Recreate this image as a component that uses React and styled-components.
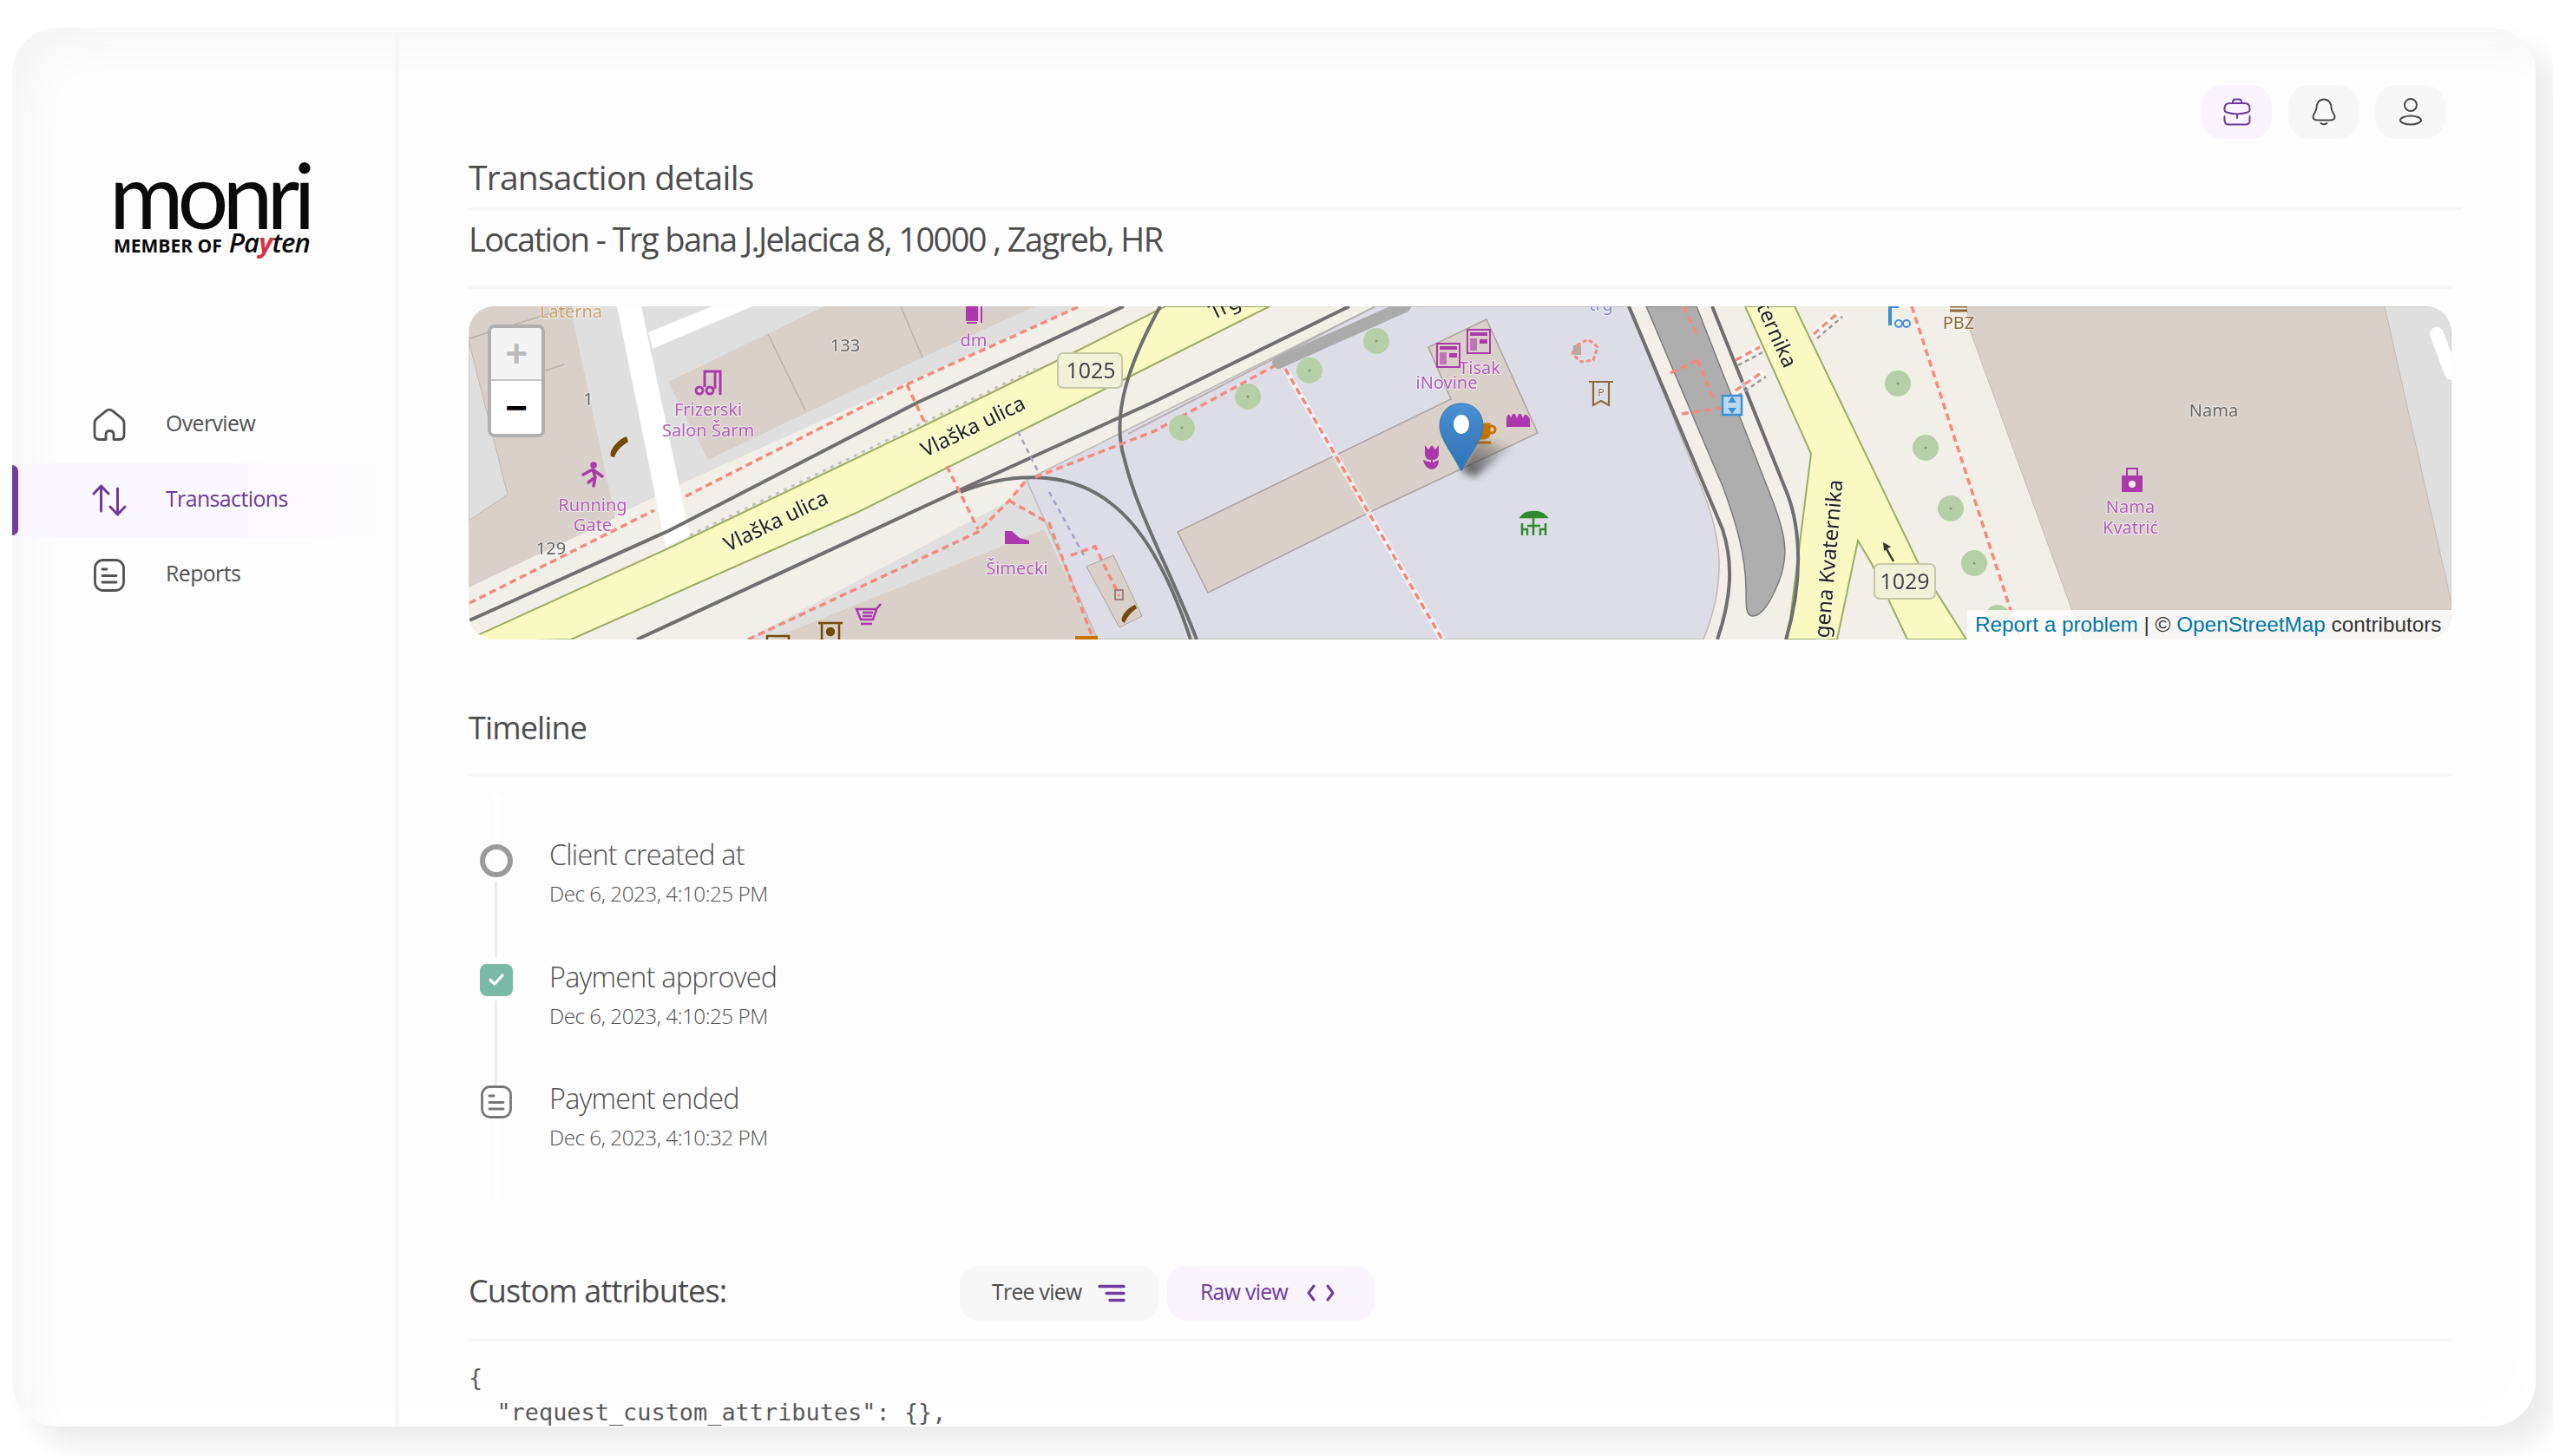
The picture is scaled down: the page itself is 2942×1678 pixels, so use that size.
import styled, { createGlobalStyle } from 'styled-components'

const GlobalStyle = createGlobalStyle`
  html, body { margin: 0; padding: 0; background: #fff; }
  body { font-family: "Open Sans", "Noto Sans", sans-serif; }
  * { box-sizing: border-box; }
`

const Page = styled.div`
  width: 2942px;
  height: 1678px;
  overflow: hidden;
  padding: 32px 20px 34px 14px;
  background: #fff;
`

const Card = styled.div`
  display: flex;
  width: 2908px;
  height: 1612px;
  border-radius: 52px;
  overflow: hidden;
  background: #fdfdfd;
  box-shadow: inset 30px 30px 60px -24px #f3f3f3, inset -24px -24px 40px -14px #ffffff, 22px 22px 30px #ececec;
`

const Sidebar = styled.aside`
  flex: 0 0 446px;
  border-right: 5px solid #f7f7f7;
  padding-top: 144px;
`

const Logo = styled.div`
  display: flex;
  flex-direction: column;
  padding-left: 117px;
  height: 271px;
  color: #0a0a0a;
`

const LogoMark = styled.div`
  font-family: Lato, sans-serif;
  font-size: 104px;
  line-height: 96px;
  letter-spacing: -7px;
  height: 86px;
  margin-left: -5px;
`

const LogoMember = styled.div`
  display: flex;
  align-items: baseline;
  gap: 8px;
  font-size: 21px;
  font-weight: 700;
  line-height: 34px;
  white-space: nowrap;
`

const Payten = styled.span`
  font-size: 31px;
  font-weight: 600;
  font-style: italic;
  letter-spacing: -0.9px;
  b { color: #d8323f; font-weight: 700; }
`

const NavRow = styled.div`
  display: flex;
  align-items: center;
  width: 431px;
  height: 86.5px;
  border-radius: 0 24px 24px 0;
  color: ${props => (props.$active ? '#6f3a9c' : '#515151')};
  background: ${props => (props.$active ? 'linear-gradient(90deg, #fbf7fe 0%, #fbf7fe 60%, rgba(251,247,254,0) 100%)' : 'transparent')};
  &::before {
    content: '';
    flex: 0 0 7px;
    height: 81px;
    border-radius: 0 8px 8px 0;
    background: ${props => (props.$active ? '#733c9f' : 'transparent')};
  }
`

const NavIcon = styled.span`
  display: flex;
  justify-content: center;
  flex: 0 0 40px;
  margin-left: 85px;
  margin-right: 45px;
`

const NavLabel = styled.span`
  font-size: 24.8px;
  letter-spacing: -0.55px;
  padding-bottom: 6px;
`

const Main = styled.main`
  flex: 1;
  min-width: 0;
  padding: 66px 85px 0 80px;
`

const TopBar = styled.div`
  display: flex;
  justify-content: flex-end;
  gap: 19px;
  height: 62px;
  padding-right: 19px;
`

const IconButton = styled.button`
  display: flex;
  align-items: center;
  justify-content: center;
  width: 81px;
  height: 62px;
  border: none;
  padding: 0;
  border-radius: 24px;
  background: ${props => (props.$active ? '#f9f4fd' : '#f7f7f7')};
  color: ${props => (props.$active ? '#6f3a9c' : '#4a4a4a')};
`

const TitleBar = styled.div`
  display: flex;
  align-items: center;
  height: 82px;
  padding-bottom: 0;
  padding-top: 7px;
  border-bottom: 3px solid #f6f6f6;
`

const Title = styled.h1`
  margin: 0;
  font-size: ${props => props.$size}px;
  font-weight: 400;
  letter-spacing: ${props => props.$spacing}px;
  color: #4d4d4d;
`

const LocationBar = styled.div`
  display: flex;
  align-items: center;
  height: 91px;
  padding-bottom: 23px;
  margin-right: 12px;
  border-bottom: 3px solid #f6f6f6;
`

const MapBox = styled.div`
  position: relative;
  height: 384px;
  margin: 20px 12px 0 0;
  border-radius: 30px;
  overflow: hidden;
  background: #f2efe9;
`

const MapDrawing = styled.svg`
  display: block;
  filter: blur(0.6px);
`

const MapText = styled.text`
  font-family: "Noto Sans", sans-serif;
  font-size: ${props => props.$size || 20}px;
  fill: ${props => props.$color || '#b05cb8'};
  stroke: rgba(255, 255, 255, 0.55);
  stroke-width: 2px;
  paint-order: stroke;
  text-anchor: ${props => props.$anchor || 'middle'};
`

const ZoomControl = styled.div`
  position: absolute;
  top: 21px;
  left: 22px;
  width: 66px;
  height: 130px;
  border: 4px solid #b0b0b0;
  border-radius: 8px;
  overflow: hidden;
`

const ZoomButton = styled.div`
  display: flex;
  align-items: center;
  justify-content: center;
  height: 61px;
  font-family: "Liberation Sans", sans-serif;
  font-size: 44px;
  font-weight: 700;
  line-height: 1;
  background: ${props => (props.$disabled ? '#f4f4f4' : '#fff')};
  color: ${props => (props.$disabled ? '#bbbbbb' : '#000')};
  border-bottom: ${props => (props.$disabled ? '2px solid #c4c4c4' : 'none')};
`

const Attribution = styled.div`
  position: absolute;
  right: 0;
  bottom: 0;
  width: 558px;
  height: 34px;
  padding-left: 9px;
  font-family: "Liberation Sans", sans-serif;
  font-size: 24.3px;
  line-height: 34px;
  white-space: nowrap;
  color: #333;
  background: rgba(255, 255, 255, 0.8);
  span { color: #0078a8; }
`

const SectionBar = styled.div`
  display: flex;
  align-items: center;
  height: 158px;
  padding: 62px 0 15px;
  margin-right: 12px;
  border-bottom: 3px solid #f6f6f6;
`

const SectionTitle = styled.h2`
  margin: 0;
  font-size: 36px;
  font-weight: 400;
  letter-spacing: -0.85px;
  color: #4d4d4d;
`

const Timeline = styled.div`
  padding-top: 66px;
  background: linear-gradient(#fff, #fff) 29px 21px / 8px 100% no-repeat;
`

const TimelineItem = styled.div`
  display: grid;
  grid-template-columns: 93px 1fr;
  height: 140.5px;
`

const Rail = styled.div`
  display: flex;
  flex-direction: column;
  align-items: center;
  width: 64px;
  padding-top: ${props => props.$top}px;
`

const Connector = styled.div`
  flex: none;
  width: 3px;
  margin: 5px 1px 0 0;
  height: ${props => props.$length}px;
  background: #ececec;
`

const StepTitle = styled.div`
  font-size: 32.3px;
  font-weight: 300;
  line-height: 46px;
  letter-spacing: -0.75px;
  color: #505050;
`

const StepDate = styled.div`
  font-size: 24.3px;
  font-weight: 300;
  line-height: 46px;
  letter-spacing: -0.5px;
  color: #4f4f4f;
`

const Ring = styled.div`
  flex: none;
  width: 38px;
  height: 38px;
  border: 6px solid #9b9b9b;
  border-radius: 50%;
`

const CheckBox = styled.div`
  flex: none;
  display: flex;
  align-items: center;
  justify-content: center;
  width: 38px;
  height: 37px;
  border-radius: 8px;
  background: #79b9a5;
`

const MutedIcon = styled.span`
  display: flex;
  color: #777;
`

const AttributesBar = styled.div`
  display: flex;
  align-items: flex-start;
  height: 87px;
  margin: 76px 12px 0 0;
  border-bottom: 3px solid #f6f6f6;
`

const AttributesTitle = styled.h2`
  flex: 0 0 566px;
  margin: 0;
  font-size: 36px;
  line-height: 57px;
  font-weight: 400;
  letter-spacing: -0.83px;
  color: #4d4d4d;
`

const ViewButton = styled.button`
  display: flex;
  align-items: center;
  gap: ${props => (props.$active ? 22 : 18)}px;
  height: 63px;
  margin-right: 10px;
  padding: 0 0 0 ${props => (props.$active ? 38 : 37)}px;
  width: ${props => (props.$active ? 239 : 229)}px;
  border: none;
  border-radius: 22px;
  font-family: inherit;
  font-size: 24.8px;
  letter-spacing: -0.7px;
  background: ${props => (props.$active ? '#f9f4fd' : '#f7f7f7')};
  color: ${props => (props.$active ? '#6f3a9c' : '#4d4d4d')};
`

const ViewLabel = styled.span`
  padding-bottom: 5px;
`

const Code = styled.pre`
  margin: 0;
  padding-top: 22px;
  font-family: "DejaVu Sans Mono", monospace;
  font-size: 26.9px;
  line-height: 40px;
  color: #5a5a5a;
`

const HomeIcon = () => (
  <svg width="38" height="40" viewBox="0 0 38 40" fill="none" stroke="currentColor" strokeWidth="2.8" strokeLinejoin="round" strokeLinecap="round">
    <path d="M15 36.5H7.5C4 36.5 2 34.5 2 31V17.5C2 15 3 13.4 5 11.8L15.5 3.4C17.6 1.8 20.4 1.8 22.5 3.4L33 11.8C35 13.4 36 15 36 17.5V31C36 34.5 34 36.5 30.5 36.5H24V31C24 28 22 26.5 19.5 26.5C16.8 26.5 15 28 15 31Z" />
  </svg>
)

const ArrowsIcon = () => (
  <svg width="40" height="37" viewBox="0 0 40 37" fill="none" stroke="currentColor" strokeWidth="3" strokeLinejoin="round" strokeLinecap="round">
    <path d="M10.5 31V2M2 11L10.5 2L19 11" />
    <path d="M29.5 5V35M21 26L29.5 35L38 26" />
  </svg>
)

const DocIcon = ({ size = 36, stroke = 2.8 }) => (
  <svg width={size} height={size + 2} viewBox="0 0 36 38" fill="none" stroke="currentColor" strokeWidth={stroke} strokeLinecap="round">
    <rect x="1.5" y="1.5" width="33" height="35" rx="9" />
    <path d="M10 12H15M10 19.5H26M10 27H26" />
  </svg>
)

const CaseIcon = () => (
  <svg width="32" height="32" viewBox="0 0 32 32" fill="none" stroke="currentColor" strokeWidth="2" strokeLinecap="round" strokeLinejoin="round">
    <path d="M11 6V4.5C11 2.5 12 1.5 14 1.5H18C20 1.5 21 2.5 21 4.5V6" />
    <path d="M1.5 12C1.5 8 3.5 6 7.5 6H24.5C28.5 6 30.5 8 30.5 12V13.5C30.5 15 29.5 16 28 16.5C20 19 12 19 4 16.5C2.5 16 1.5 15 1.5 13.5Z" />
    <path d="M1.5 21V25.5C1.5 28.5 3.5 30.5 6.5 30.5H25.5C28.5 30.5 30.5 28.5 30.5 25.5V21" />
    <path d="M16 19V23" />
  </svg>
)

const BellIcon = () => (
  <svg width="28" height="32" viewBox="0 0 28 32" fill="none" stroke="currentColor" strokeWidth="2" strokeLinecap="round" strokeLinejoin="round">
    <path d="M14 1.5C8.5 1.5 5.5 6 5.5 11C5.5 16 1.5 18 1.5 21.5C1.5 25 4 25.5 7 25.5H21C24 25.5 26.5 25 26.5 21.5C26.5 18 22.5 16 22.5 11C22.5 6 19.5 1.5 14 1.5Z" />
    <path d="M10.5 29C12.5 30.5 15.5 30.5 17.5 29" />
  </svg>
)

const UserIcon = () => (
  <svg width="28" height="32" viewBox="0 0 28 32" fill="none" stroke="currentColor" strokeWidth="2" strokeLinecap="round">
    <circle cx="14" cy="8" r="7" />
    <ellipse cx="14" cy="25.5" rx="12" ry="5" />
  </svg>
)

const TreeIcon = () => (
  <svg width="32" height="21" viewBox="0 0 32 21" stroke="#6f3a9c" strokeWidth="3.4" strokeLinecap="round">
    <path d="M2 2.5H30M10 10.5H30M14 18.5H30" />
  </svg>
)

const CodeIcon = () => (
  <svg width="32" height="22" viewBox="0 0 32 22" fill="none" stroke="#6f3a9c" strokeWidth="3" strokeLinecap="round" strokeLinejoin="round">
    <path d="M8 3L2 11L8 19M24 3L30 11L24 19" />
  </svg>
)

const CheckIcon = () => (
  <svg width="20" height="16" viewBox="0 0 20 16" fill="none" stroke="#fff" strokeWidth="3.2" strokeLinecap="round" strokeLinejoin="round">
    <path d="M3 8.5L8 13L17 3" />
  </svg>
)

const poiLabels = [
  ['dm', 1122, 399],
  ['Frizerski', 816, 479],
  ['Salon Šarm', 816, 503],
  ['Running', 683, 589],
  ['Gate', 683, 612],
  ['Šimecki', 1172, 662],
  ['Tisak', 1705, 431],
  ['iNovine', 1667, 448],
  ['Nama', 2455, 591],
  ['Kvatrić', 2455, 615],
]

const greyLabels = [
  ['133', 974, 405],
  ['1', 678, 467],
  ['129', 635, 639],
  ['Nama', 2551, 480],
]

const trees = [[1586, 393], [1509, 427], [1438, 457], [1362, 493], [2187, 442], [2219, 516], [2248, 586], [2275, 649], [2302, 712]]

const DASH = '8 5'
const redPaths = [
  'M541 695L754 588',
  'M790 572L1045 443L1244 353',
  'M1045 443L1066 488',
  'M1091 537L1127 610',
  'M862 737L1127 613L1163 577L1183 553',
  'M1193 550L1330 497L1468 422',
  'M1163 577L1209 603L1260 737',
  'M1234 640L1262 630L1290 687',
  'M1481 425L1662 737',
  'M1940 353L1956 387',
  'M1956 415L1976 463',
  'M1925 430L1956 415',
  'M1938 477L1984 470',
  'M2203 353L2328 737',
  'M2000 450L2032 428',
  'M2000 415L2028 400',
  'M2090 385L2119 360',
]

const OsmMap = () => (
  <MapDrawing width="2285" height="384" viewBox="540 353 2285 384">
    <defs>
      <linearGradient id="pinFill" x1="0" y1="0" x2="0" y2="1">
        <stop offset="0" stopColor="#4a90d2" />
        <stop offset="0.6" stopColor="#3a7dc0" />
        <stop offset="1" stopColor="#2b77bd" />
      </linearGradient>
      <linearGradient id="pinShadow" x1="0" y1="1" x2="1" y2="0">
        <stop offset="0" stopColor="#333" stopOpacity="0.85" />
        <stop offset="1" stopColor="#333" stopOpacity="0" />
      </linearGradient>
      <filter id="pinBlur"><feGaussianBlur stdDeviation="4" /></filter>
    </defs>

    {/* ground */}
    <rect x="540" y="353" width="2285" height="384" fill="#f2efe9" />
    <path d="M540 353H1244L1040 443L795 553L540 677Z" fill="#e0dfdf" />
    <path d="M540 353H657L709 597L540 677Z" fill="#d9d0c9" />
    <path d="M540 392L585 570L540 600Z" fill="#e0dfdf" stroke="#bdb6b0" />
    <path d="M770 440L950 353H1193L1063 412L816 530Z" fill="#d9d0c9" />
    <path d="M885 385L928 473M1038 353L1063 412M660 353L541 390M650 420L590 440" stroke="#b8b0a9" strokeWidth="1.5" fill="none" />
    <path d="M711 353H739L795 617L767 630Z" fill="#fff" />
    <path d="M739 353H821L747 383L752 402L867 353H739Z" fill="#fff" />

    <path d="M860 737L1163 577L1183 553L1265 737Z" fill="#e0dfdf" />
    <path d="M887 737L1203 610L1265 737Z" fill="#d9d0c9" />

    {/* plaza */}
    <path d="M1183 553L1585 353H1877L1960 560C1985 620 1990 670 1963 737H1265Z" fill="#dddde8" stroke="#bfb9b4" strokeWidth="1.5" />
    <path d="M1252 653L1283 640L1316 710L1290 723Z" fill="#d9d0c9" stroke="#a9a39d" />
    <path d="M1713 368L1772 499L1583 588L1392 683L1357 613L1672 460L1646 400Z" fill="#d9d0c9" stroke="#aaa39d" strokeWidth="1.5" />

    {/* right side */}
    <path d="M2266 353H2748L2825 695V737H2400L2271 383Z" fill="#d9d0c9" stroke="#c4bcb4" />
    <path d="M2748 353H2825V695Z" fill="#e0dfdf" stroke="#c4bcb4" />
    <path d="M2808 385L2825 430" stroke="#fff" strokeWidth="16" strokeLinecap="round" />

    <path d="M1897 353H1955L2040 570C2058 615 2062 640 2050 670C2040 695 2030 710 2020 710C2012 710 2012 700 2012 680C2012 640 2000 600 1985 560Z" fill="#aeaeae" stroke="#7c7c7c" strokeWidth="1.5" />

    {/* Kvaternika */}
    <path d="M2011 353L2087 523L2060 737H2117L2141 623L2157 650L2198 737H2266L2211 650L2068 353Z" fill="#f8fac2" stroke="#9cad62" strokeWidth="2" />

    {/* Vlaska ulica */}
    <path d="M533 740L770 632L1066 490L1244 403L1343 353H1463L1270 450L989 590L658 737Z" fill="#f8fac2" stroke="#9cad62" strokeWidth="2" />
    <path d="M795 617L1193 425" stroke="#c4c4b4" strokeWidth="3" strokeDasharray="4 6" fill="none" />

    {/* rail lines */}
    <g fill="none" stroke="#6f6f6f" strokeWidth="4">
      <path d="M541 715L770 612L1055 465L1295 353" />
      <path d="M734 737L1101 567L1330 463L1555 353" />
      <path d="M1877 353L1985 610C1998 650 1995 690 1979 737" />
      <path d="M1973 353L2060 570C2075 610 2078 670 2058 737" />
      <path d="M1337 353C1300 420 1280 480 1296 530C1310 590 1350 660 1379 737" />
      <path d="M1107 567C1160 545 1230 540 1280 580C1320 610 1350 670 1372 737" />
    </g>
    <path d="M1300 500L1585 353" stroke="#b8b3b0" strokeWidth="2" fill="none" />
    <path d="M1473 418L1619 353" stroke="#ababab" strokeWidth="14" strokeLinecap="round" fill="none" />
    <path d="M1173 497L1198 547M1209 567L1249 640" stroke="#a9a0c9" strokeWidth="2.5" strokeDasharray="6 5" fill="none" />

    {/* footways */}
    <path d="M1481 425L1662 737M2000 450L2032 428M2000 415L2028 400M2090 385L2119 360" stroke="#fff" strokeWidth="7" opacity="0.6" fill="none" />
    <path d="M2003 456L2035 434M2003 421L2031 406M2094 390L2123 365" stroke="#999" strokeWidth="2.5" strokeDasharray="5 4" fill="none" />
    <g fill="none" stroke="#f58a7c" strokeWidth="3.5" strokeDasharray={DASH}>
      {redPaths.map(d => <path key={d} d={d} />)}
    </g>

    {trees.map(([cx, cy]) => (
      <g key={cx}>
        <circle cx={cx} cy={cy} r="15" fill="#b5d0a6" />
        <circle cx={cx} cy={cy} r="1.5" fill="#7a9a74" />
      </g>
    ))}

    {/* road shields */}
    <g fill="#f1f1d8" stroke="#c6c6a8" strokeWidth="2">
      <rect x="1219" y="407" width="74" height="40" rx="6" />
      <rect x="2160" y="650" width="70" height="40" rx="6" />
    </g>
    <MapText x="1257" y="436" $size={25} $color="#444">1025</MapText>
    <MapText x="2195" y="679" $size={25} $color="#444">1029</MapText>

    {/* road names */}
    <MapText x="895" y="602" $size={24} $color="#222" transform="rotate(-26 895 602)" dominantBaseline="middle">Vlaška ulica</MapText>
    <MapText x="1122" y="493" $size={24} $color="#222" transform="rotate(-26 1122 493)" dominantBaseline="middle">Vlaška ulica</MapText>
    <MapText x="1412" y="355" $size={24} $color="#222" transform="rotate(-26 1412 355)" dominantBaseline="middle">Trg</MapText>
    <MapText x="2062" y="423" $size={24} $color="#222" $anchor="end" transform="rotate(66 2062 423)" dominantBaseline="middle">Kvaternika</MapText>
    <MapText x="2117" y="553" $size={24} $color="#222" $anchor="end" transform="rotate(-85 2117 553)" dominantBaseline="middle">Eugena Kvaternika</MapText>

    {poiLabels.map(([text, x, y]) => <MapText key={text + x} x={x} y={y}>{text}</MapText>)}
    {greyLabels.map(([text, x, y]) => <MapText key={text + x} x={x} y={y} $color="#666">{text}</MapText>)}
    <MapText x="658" y="366" $color="#c9a06a">Laterna</MapText>
    <MapText x="2257" y="379" $color="#8a6a3a">PBZ</MapText>
    <MapText x="1845" y="358" $color="#8a8ac0">trg</MapText>

    {/* dm */}
    <path d="M1114 353H1126V369H1114ZM1131 353V372M1114 372H1126" fill="#ac39ac" stroke="#ac39ac" strokeWidth="2" />
    {/* hairdresser */}
    <g fill="none" stroke="#ac39ac" strokeWidth="3">
      <circle cx="806" cy="450" r="4" />
      <circle cx="818" cy="450" r="4" />
      <path d="M812 446V428H830V455M824 428V448" />
    </g>
    {/* phones */}
    <path d="M704 526C701 520 712 506 722 503L724 509C716 514 710 520 708 527Z" fill="#734a08" />
    <path d="M1293 716C1291 710 1300 700 1308 697L1310 701C1304 705 1298 712 1296 718Z" fill="#734a08" />
    {/* runner */}
    <g fill="none" stroke="#ac39ac" strokeWidth="3.5" strokeLinecap="round">
      <circle cx="684" cy="536" r="2" />
      <path d="M683 541L686 550L684 560M672 547L683 541L694 549M686 550L678 556" />
    </g>
    {/* shoe */}
    <path d="M1158 612H1166L1175 620L1186 623V627H1158Z" fill="#ac39ac" />
    {/* cart */}
    <g fill="none" stroke="#ac39ac" strokeWidth="2.5">
      <path d="M987 702H1010L1006 714H992ZM1010 702L1015 696M992 719H1005" />
      <path d="M994 706H1006M994 710H1005" />
    </g>
    {/* atm and shops on the lower edge */}
    <g fill="none" stroke="#734a08" strokeWidth="2.5">
      <path d="M943 718H971M947 718V737M967 718V737" />
      <circle cx="957" cy="728" r="4" fill="#734a08" />
      <path d="M884 737V733H909V737" />
    </g>
    <rect x="1239" y="733" width="26" height="6" fill="#c77400" />
    <rect x="1285" y="680" width="9" height="11" fill="none" stroke="#8a6a6a" strokeWidth="1.5" />
    {/* news */}
    <g fill="none" stroke="#ac39ac" strokeWidth="2">
      <rect x="1656" y="396" width="26" height="27" />
      <rect x="1691" y="380" width="26" height="27" />
    </g>
    <g fill="#ac39ac">
      <rect x="1659" y="399" width="20" height="4" />
      <rect x="1659" y="406" width="8" height="14" opacity="0.6" />
      <rect x="1670" y="407" width="9" height="5" />
      <rect x="1694" y="383" width="20" height="4" />
      <rect x="1694" y="390" width="8" height="14" opacity="0.6" />
      <rect x="1705" y="391" width="9" height="5" />
      {/* bakery */}
      <path d="M1736 492V482C1737 477 1740 476 1741 482C1743 475 1746 475 1748 482C1750 475 1753 475 1755 482C1756 476 1760 477 1763 483V492Z" />
      {/* flowers */}
      <path d="M1642 513L1646 518L1650 513L1654 518L1658 513V524C1657 529 1654 530 1651 530V533L1658 530C1658 537 1654 541 1650 541C1646 541 1641 537 1640 530L1649 533V530C1646 530 1643 529 1642 524Z" />
      {/* bag */}
      <path d="M2445 548H2469V567H2445Z" />
    </g>
    <path d="M2451 548V540H2463V548" fill="none" stroke="#ac39ac" strokeWidth="2" />
    <circle cx="2457" cy="558" r="4" fill="#eed" />
    {/* cafe */}
    <g fill="none" stroke="#c77400" strokeWidth="3">
      <path d="M1704 489H1716V500C1716 503 1713 505 1710 505H1704" fill="#c77400" />
      <circle cx="1719" cy="495" r="4" />
      <path d="M1702 510H1718" />
    </g>
    {/* outdoor seating */}
    <g fill="none" stroke="#2f8a2f" strokeWidth="2.5">
      <path d="M1753 596C1758 588 1776 588 1782 596Z" fill="#2f8a2f" />
      <path d="M1767 596V617M1760 606H1775M1754 603V617M1754 610H1760V617M1781 603V617M1781 610H1775V617" />
    </g>
    {/* red square */}
    <path d="M1817 398L1830 391L1841 400L1836 415L1822 417L1812 408Z" fill="none" stroke="#f58a7c" strokeWidth="3" strokeDasharray="5 3" />
    <rect x="1813" y="398" width="9" height="11" fill="#b8a8a0" />
    {/* parking entrance */}
    <g fill="none" stroke="#8a6a3a" strokeWidth="2.2">
      <path d="M1831 440H1859M1836 440V467L1845 462L1854 467V440" />
    </g>
    <MapText x="1845" y="457" $size={13} $color="#8a6a3a">P</MapText>
    {/* elevator */}
    <rect x="1985" y="456" width="22" height="22" fill="#bcd8f0" stroke="#3b8fd6" strokeWidth="2.5" />
    <path d="M1996 457L2001 464H1991ZM1996 477L2001 470H1991Z" fill="#3b8fd6" />
    {/* bicycle parking */}
    <path d="M2178 353V375M2178 353H2188" stroke="#3b8fd6" strokeWidth="4" fill="none" />
    <circle cx="2188" cy="373" r="4" fill="none" stroke="#3b8fd6" strokeWidth="2" />
    <circle cx="2197" cy="373" r="4" fill="none" stroke="#3b8fd6" strokeWidth="2" />
    <path d="M2247 353H2267M2247 358H2267" stroke="#8a6a3a" strokeWidth="3" />
    {/* arrow on the carriageway */}
    <path d="M2182 647L2173 631" stroke="#333" strokeWidth="2.5" />
    <path d="M2170 625L2179 630L2171 635Z" fill="#333" />

    {/* marker */}
    <path d="M1684 543L1702 505L1742 515L1700 550Z" fill="url(#pinShadow)" filter="url(#pinBlur)" />
    <path d="M1684 465C1701 465 1709 478 1709 491C1709 505 1696 520 1684 543C1672 520 1659 505 1659 491C1659 478 1667 465 1684 465Z" fill="url(#pinFill)" stroke="#3a78b4" />
    <ellipse cx="1684" cy="489" rx="9" ry="11" fill="#fff" />
  </MapDrawing>
)

const App = () => (
  <Page>
    <GlobalStyle />
    <Card>
      <Sidebar>
        <Logo>
          <LogoMark>monri</LogoMark>
          <LogoMember>
            MEMBER OF
            <Payten>Pa<b>y</b>ten</Payten>
          </LogoMember>
        </Logo>
        <NavRow>
          <NavIcon><HomeIcon /></NavIcon>
          <NavLabel>Overview</NavLabel>
        </NavRow>
        <NavRow $active>
          <NavIcon><ArrowsIcon /></NavIcon>
          <NavLabel>Transactions</NavLabel>
        </NavRow>
        <NavRow>
          <NavIcon><DocIcon /></NavIcon>
          <NavLabel>Reports</NavLabel>
        </NavRow>
      </Sidebar>

      <Main>
        <TopBar>
          <IconButton $active><CaseIcon /></IconButton>
          <IconButton><BellIcon /></IconButton>
          <IconButton><UserIcon /></IconButton>
        </TopBar>

        <TitleBar><Title $size={39} $spacing={-0.75}>Transaction details</Title></TitleBar>
        <LocationBar><Title $size={38} $spacing={-1.6}>Location - Trg bana J.Jelacica 8, 10000 , Zagreb, HR</Title></LocationBar>

        <MapBox>
          <OsmMap />
          <ZoomControl>
            <ZoomButton $disabled>+</ZoomButton>
            <ZoomButton>−</ZoomButton>
          </ZoomControl>
          <Attribution>
            <span>Report a problem</span> | © <span>OpenStreetMap</span> contributors
          </Attribution>
        </MapBox>

        <SectionBar><SectionTitle>Timeline</SectionTitle></SectionBar>

        <Timeline>
          <TimelineItem>
            <Rail $top={12}>
              <Ring />
              <Connector $length={87} />
            </Rail>
            <div>
              <StepTitle>Client created at</StepTitle>
              <StepDate>Dec 6, 2023, 4:10:25 PM</StepDate>
            </div>
          </TimelineItem>
          <TimelineItem>
            <Rail $top={9}>
              <CheckBox><CheckIcon /></CheckBox>
              <Connector $length={98} />
            </Rail>
            <div>
              <StepTitle>Payment approved</StepTitle>
              <StepDate>Dec 6, 2023, 4:10:25 PM</StepDate>
            </div>
          </TimelineItem>
          <TimelineItem>
            <Rail $top={9}>
              <MutedIcon><DocIcon /></MutedIcon>
            </Rail>
            <div>
              <StepTitle>Payment ended</StepTitle>
              <StepDate>Dec 6, 2023, 4:10:32 PM</StepDate>
            </div>
          </TimelineItem>
        </Timeline>

        <AttributesBar>
          <AttributesTitle>Custom attributes:</AttributesTitle>
          <ViewButton><ViewLabel>Tree view</ViewLabel> <TreeIcon /></ViewButton>
          <ViewButton $active><ViewLabel>Raw view</ViewLabel> <CodeIcon /></ViewButton>
        </AttributesBar>

        <Code>{`{
  "request_custom_attributes": {},`}</Code>
      </Main>
    </Card>
  </Page>
)

export default App
